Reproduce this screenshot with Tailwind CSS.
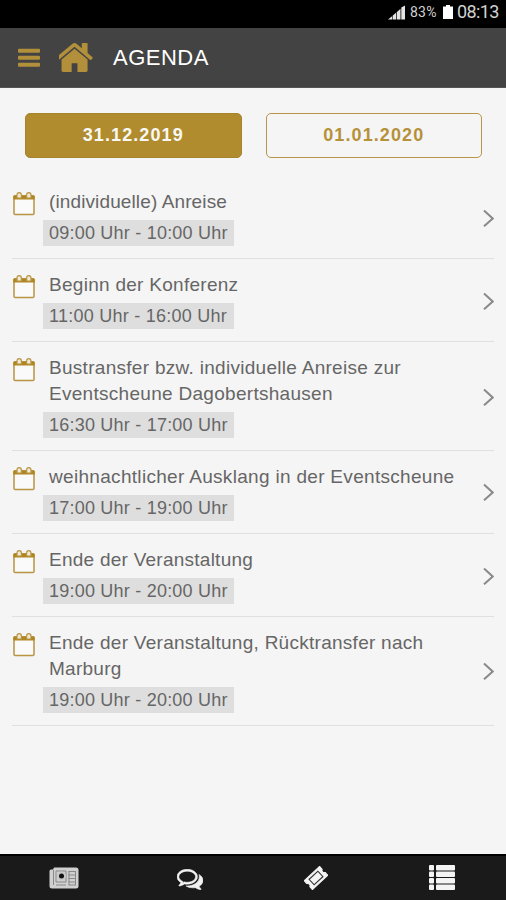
<!DOCTYPE html>
<html lang="de">
<head>
    <meta charset="UTF-8">
    <meta name="viewport" content="width=device-width, initial-scale=1.0">
    <title>Agenda</title>
    <script src="https://cdn.jsdelivr.net/npm/@tailwindcss/browser@4"></script>
</head>
<body class="bg-[#f5f5f5] font-['Liberation_Sans',Arial,sans-serif] text-[#666]">
    <!-- Shared icons -->
    <svg class="hidden">
        <symbol id="calendar" viewBox="0 0 22 24">
            <rect x="1" y="4" width="20" height="18.5" rx="1.2" fill="#fafafa" stroke="#b89445" stroke-width="1.5"/>
            <path d="M.3 7.500V4.500q0-1.200 1.200-1.200h19q1.200 0 1.200 1.200v3z" fill="#b08622"/>
            <path d="M4 6V3q0-2.300 2.200-2.300T8.400 3v3zM13.600 6V3q0-2.300 2.200-2.300T18 3v3z" fill="#f0e8d4" stroke="#b89445" stroke-width="1.200"/>
        </symbol>
        <symbol id="chevron" viewBox="0 0 11 18">
            <path d="M1 1.500l8.700 8L1 17.300" fill="none" stroke="#8a8a8a" stroke-width="2"/>
        </symbol>
    </svg>

    <div class="h-[900px] flex flex-col overflow-hidden">
        <!-- Status bar -->
        <div class="h-7 shrink-0 bg-black flex items-center justify-end pr-[7px] pb-1 text-[#d2d2d2] font-[Roboto,sans-serif]">
            <svg class="w-[18px] h-[15px] mr-1" viewBox="0 0 18 15" fill="#e4e4e4">
                <path d="M0 14.5l4-3.3v3.3zM4.6 14.5v-3.8l3.4-3v6.8zM8.7 14.5V7.2l3.8-3.4v10.7zM13.3 14.5V2.5L17 .5v14z"/>
            </svg>
            <span class="text-[14px] w-[29px] whitespace-nowrap tracking-[0.2px]">83%</span>
            <svg class="w-[10px] h-[14px] mx-1" viewBox="0 0 10 14" fill="#fff">
                <path d="M3 0h4v1.5h3V14H0V1.5h3z"/>
            </svg>
            <span class="text-[18px] leading-none w-[42px] whitespace-nowrap tracking-[-0.6px]">08:13</span>
        </div>

        <!-- Header -->
        <header class="h-[60px] shrink-0 bg-[#434343] border-b border-[#555] flex items-center pl-[18px]">
            <svg class="w-[22px] h-[19px]" viewBox="0 0 22 19" fill="#b28f3a">
                <rect width="22" height="4" y=".8" rx="1"/>
                <rect width="22" height="4" y="7.8" rx="1"/>
                <rect width="22" height="4" y="14.8" rx="1"/>
            </svg>
            <svg class="w-[34px] h-[29px] ml-[19px] mb-px" viewBox="153 253 1486 1283" fill="#b28f3a">
                <path d="M1408 992v480q0 26-19 45t-45 19h-384v-384h-256v384h-384q-26 0-45-19t-19-45v-480q0-1 .5-3t.5-3l575-474 575 474q1 2 1 6zm223-69l-62 74q-8 9-21 11h-3q-13 0-21-7l-692-577-692 577q-12 8-24 7-13-2-21-11l-62-74q-8-10-7-23.5t11-21.5l719-599q32-26 76-26t76 26l244 204v-195q0-14 9-23t23-9h192q14 0 23 9t9 23v408l219 182q10 8 11 21.5t-7 23.5z"/>
            </svg>
            <h1 class="ml-5 text-[22px] leading-none tracking-[0.5px] text-white">AGENDA</h1>
        </header>

        <main class="flex-1">
            <!-- Date tabs -->
            <div class="flex gap-6 pl-[25px] pr-6 pt-[25px] pb-[18px] text-[18px] font-bold tracking-[1.1px]">
                <button class="flex-1 h-[45px] rounded-[5px] border border-[#a5842c] bg-[#b08c2e] text-[#f8f8f4]">31.12.2019</button>
                <button class="flex-1 h-[45px] rounded-[5px] border border-[#b89549] text-[#b5913a]">01.01.2020</button>
            </div>

            <ul class="mx-3 text-[19px] leading-[25.6px]">
                <li class="flex items-center border-b border-[#dfdfdf] pt-[13px] pb-3">
                    <svg class="w-[22px] h-6 self-start ml-px mt-[3px]"><use href="#calendar"/></svg>
                    <div class="flex-1 ml-2">
                        <h2 class="pl-[6px] tracking-[0.12px]">(individuelle) Anreise</h2>
                        <span class="block w-[191px] mt-[5.5px] pl-[6px] bg-[#dedede] text-[18px] leading-[26px] tracking-[0.22px] whitespace-nowrap">09:00 Uhr - 10:00 Uhr</span>
                    </div>
                    <svg class="w-[11px] h-[18px]"><use href="#chevron"/></svg>
                </li>
                <li class="flex items-center border-b border-[#dfdfdf] pt-[13px] pb-3">
                    <svg class="w-[22px] h-6 self-start ml-px mt-[3px]"><use href="#calendar"/></svg>
                    <div class="flex-1 ml-2">
                        <h2 class="pl-[6px] tracking-[0.28px]">Beginn der Konferenz</h2>
                        <span class="block w-[191px] mt-[5.5px] pl-[6px] bg-[#dedede] text-[18px] leading-[26px] tracking-[0.25px] whitespace-nowrap">11:00 Uhr - 16:00 Uhr</span>
                    </div>
                    <svg class="w-[11px] h-[18px]"><use href="#chevron"/></svg>
                </li>
                <li class="flex items-center border-b border-[#dfdfdf] pt-[13px] pb-3">
                    <svg class="w-[22px] h-6 self-start ml-px mt-[3px]"><use href="#calendar"/></svg>
                    <div class="flex-1 ml-2">
                        <h2 class="pl-[6px] tracking-[0.29px]">Bustransfer bzw. individuelle Anreise zur<br>Eventscheune Dagobertshausen</h2>
                        <span class="block w-[191px] mt-[5.5px] pl-[6px] bg-[#dedede] text-[18px] leading-[26px] tracking-[0.22px] whitespace-nowrap">16:30 Uhr - 17:00 Uhr</span>
                    </div>
                    <svg class="w-[11px] h-[18px]"><use href="#chevron"/></svg>
                </li>
                <li class="flex items-center border-b border-[#dfdfdf] pt-[13px] pb-3">
                    <svg class="w-[22px] h-6 self-start ml-px mt-[3px]"><use href="#calendar"/></svg>
                    <div class="flex-1 ml-2">
                        <h2 class="pl-[6px] tracking-[0.31px] whitespace-nowrap">weihnachtlicher Ausklang in der Eventscheune</h2>
                        <span class="block w-[191px] mt-[5.5px] pl-[6px] bg-[#dedede] text-[18px] leading-[26px] tracking-[0.22px] whitespace-nowrap">17:00 Uhr - 19:00 Uhr</span>
                    </div>
                    <svg class="w-[11px] h-[18px]"><use href="#chevron"/></svg>
                </li>
                <li class="flex items-center border-b border-[#dfdfdf] pt-[13px] pb-3">
                    <svg class="w-[22px] h-6 self-start ml-px mt-[3px]"><use href="#calendar"/></svg>
                    <div class="flex-1 ml-2">
                        <h2 class="pl-[6px] tracking-[0.25px]">Ende der Veranstaltung</h2>
                        <span class="block w-[191px] mt-[5.5px] pl-[6px] bg-[#dedede] text-[18px] leading-[26px] tracking-[0.22px] whitespace-nowrap">19:00 Uhr - 20:00 Uhr</span>
                    </div>
                    <svg class="w-[11px] h-[18px]"><use href="#chevron"/></svg>
                </li>
                <li class="flex items-center border-b border-[#dfdfdf] pt-[13px] pb-3">
                    <svg class="w-[22px] h-6 self-start ml-px mt-[3px]"><use href="#calendar"/></svg>
                    <div class="flex-1 ml-2">
                        <h2 class="pl-[6px] tracking-[0.27px]">Ende der Veranstaltung, Rücktransfer nach<br>Marburg</h2>
                        <span class="block w-[191px] mt-[5.5px] pl-[6px] bg-[#dedede] text-[18px] leading-[26px] tracking-[0.22px] whitespace-nowrap">19:00 Uhr - 20:00 Uhr</span>
                    </div>
                    <svg class="w-[11px] h-[18px]"><use href="#chevron"/></svg>
                </li>
            </ul>
        </main>

        <!-- Bottom navigation -->
        <nav class="h-[46px] shrink-0 bg-[#1a1a1a] border-t-2 border-black grid grid-cols-4 items-center justify-items-center px-px">
            <!-- News -->
            <svg class="w-[30px] h-[22px]" viewBox="0 0 30 22">
                <path d="M5 .5h22q2.5 0 2.5 2.5v16q0 2.500-2.500 2.500H3Q.5 21.500.5 19V4q0-1.500 1.500-1.500h2z" fill="#d0d0d0"/>
                <path d="M4.500 3v15M7 4h10v11H7zM7 18h10M19.500 4.500H27M19.500 8H27M19.500 11.500H27M19.500 15H27M19.500 18H27M20 4v14M26.500 4v14" fill="none" stroke="#888"/>
                <circle cx="12.500" cy="9" r="4.500" fill="#c8c8c8"/>
                <circle cx="12.500" cy="9" r="2.500" fill="#111"/>
            </svg>
            <!-- Chat -->
            <svg class="w-[26px] h-[21px] mt-[3px]" viewBox="0 256 1792 1408" fill="#f2f2f2" stroke="#f2f2f2" stroke-width="40">
                <path d="M704 384q-153 0-286 52t-211.500 141-78.500 191q0 82 53 158t149 132l97 56-35 84q34-20 62-39l44-31 53 10q78 14 153 14 153 0 286-52t211.500-141 78.500-191-78.500-191-211.500-141-286-52zm0-128q191 0 353.500 68.500t256.500 186.500 94 257-94 257-256.500 186.500-353.500 68.500q-86 0-176-16-124 88-278 128-36 9-86 16h-3q-11 0-20.500-8t-11.500-21q-1-3-1-6.500t.5-6.500 2-6l2.500-5 3.500-5.500 4-5 4.500-5 4-4.500q5-6 23-25t26-29.500 22.500-29 25-38.500 20.500-44q-124-72-195-177t-71-224q0-139 94-257t256.500-186.500 353.500-68.500zm822 1169q10 24 20.500 44t25 38.500 22.500 29 26 29.500 23 25q1 1 4 4.500t4.500 5 4 5 3.500 5.500l2.500 5 2 6 .5 6.500-1 6.500q-3 14-13 22t-22 7q-50-7-86-16-154-40-278-128-90 16-176 16-271 0-472-132 58 4 88 4 161 0 309-45t264-129q125-92 192-212t67-254q0-77-23-152 129 71 204 178t75 230q0 120-71 224.500t-195 176.500z"/>
            </svg>
            <!-- Tickets -->
            <svg class="w-6 h-6" viewBox="0 0 24 24">
                <g transform="rotate(-43 12 12)">
                    <path d="M1.500 6h21v3.800a2.400 2.400 0 0 0 0 4.400V18h-21v-3.800a2.400 2.400 0 0 0 0-4.400z" fill="#f4f4f4" stroke="#f4f4f4" stroke-linejoin="round"/>
                    <rect x="6" y="8.300" width="12" height="7.400" fill="none" stroke="#333" stroke-width="1.100"/>
                </g>
            </svg>
            <!-- Agenda list -->
            <svg class="w-[26px] h-[25px] mb-[2px]" viewBox="0 0 26 25" fill="#f4f4f4">
                <rect x="0" y="0" width="5" height="5.500" rx="1"/><rect x="7" y="0" width="19" height="5.500" rx="1"/>
                <rect x="0" y="6.500" width="5" height="5.500" rx="1"/><rect x="7" y="6.500" width="19" height="5.500" rx="1"/>
                <rect x="0" y="13" width="5" height="5.500" rx="1"/><rect x="7" y="13" width="19" height="5.500" rx="1"/>
                <rect x="0" y="19.500" width="5" height="5.500" rx="1"/><rect x="7" y="19.500" width="19" height="5.500" rx="1"/>
            </svg>
        </nav>
    </div>
</body>
</html>
